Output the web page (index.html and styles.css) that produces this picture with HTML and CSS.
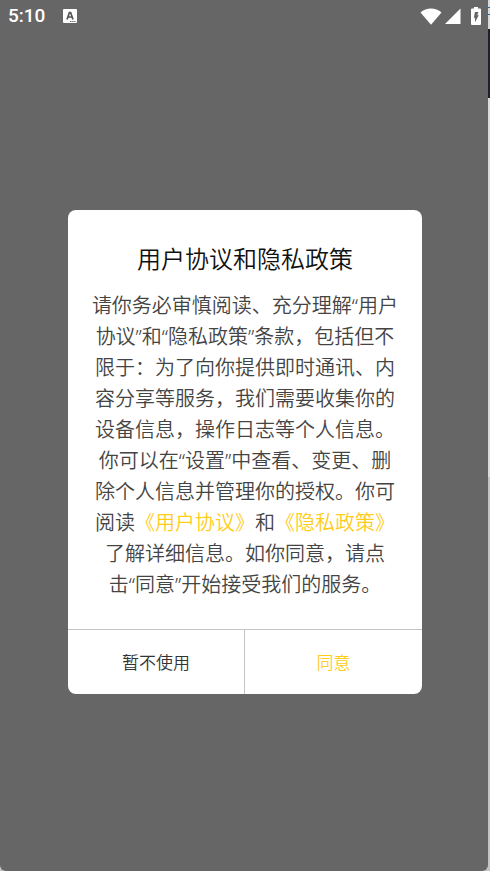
FILE: index.html
```html
<!DOCTYPE html>
<html lang="zh-CN">
<head>
  <meta charset="UTF-8" />
  <meta name="viewport" content="width=device-width, initial-scale=1.0"/>
  <title>用户协议和隐私政策</title>
  <link rel="stylesheet" href="styles.css">
</head>
<body>
  <div class="screen">
    <header class="statusbar">
      <span class="time">5:10</span>
      <svg class="icon-input" width="14" height="14" viewBox="0 0 14 14">
        <rect width="14" height="14" rx="1" fill="#fff"/>
        <path d="M4 10.5 L6.4 3.5 H7.6 L10 10.5 M5 8 H9" fill="none" stroke="#555" stroke-width="1.7"/>
        <path d="M7 12.5 H12.5" stroke="#666" stroke-dasharray="1.5 0.6"/>
      </svg>
      <div class="indicators">
        <svg width="22" height="17" viewBox="0 0 22 17">
          <path d="M0.5 4.5 C6 -1 16 -1 21.5 4.5 L11 16.8 Z" fill="#fff"/>
        </svg>
        <svg class="icon-signal" width="16" height="16" viewBox="0 0 16 16">
          <path d="M0 16 L15.5 0.5 V16 Z" fill="#fff"/>
        </svg>
        <svg class="icon-battery" width="10" height="18" viewBox="0 0 10 18">
          <path d="M3 0 H7 V1.5 H9 Q10 1.5 10 2.5 V17 Q10 18 9 18 H1 Q0 18 0 17 V2.5 Q0 1.5 1 1.5 H3 Z" fill="#fff"/>
          <path d="M4 5 H7.4 L6.3 8.3 H7.8 L4 15.2 V10.8 H2.8 Z" fill="#666"/>
        </svg>
      </div>
    </header>

    <main class="content">
      <section class="dialog" role="dialog" aria-labelledby="dialog-title">
        <h1 class="dialog-title" id="dialog-title">用户协议和隐私政策</h1>
        <p class="dialog-text">请你务必审慎阅读、充分理解“用户协议”和“隐私政策”条款，包括但不限于：为了向你提供即时通讯、内容分享等服务，我们需要收集你的设备信息，操作日志等个人信息。你可以在“设置”中查看、变更、删除个人信息并管理你的授权。你可阅读<a href="#">《用户协议》</a>和<a href="#">《隐私政策》</a>了解详细信息。如你同意，请点<br>击“同意”开始接受我们的服务。</p>
        <div class="dialog-buttons">
          <button type="button" class="decline">暂不使用</button>
          <button type="button" class="agree">同意</button>
        </div>
      </section>
    </main>
  </div>
</body>
</html>
```
FILE: styles.css
```css
* {
  box-sizing: border-box;
}

body {
  margin: 0;
  padding-right: 2px;
  background: linear-gradient(
    #d8d8d8 7px, #2a6ca0 7px, #2a6ca0 8px,
    #d8d8d8 8px, #d8d8d8 14px, #2a6ca0 14px, #2a6ca0 15px,
    #d8d8d8 15px, #d8d8d8 29px, #1c2030 29px, #1c2030 98px,
    #dcdcdc 98px, #dcdcdc 477px, #c4c4c4 477px);
  font-family: Roboto, "Noto Sans CJK SC", sans-serif;
}

.screen {
  display: flex;
  flex-direction: column;
  min-height: 100vh;
  background: #666;
  border-radius: 0 0 6px 6px;
}

/* status bar */
.statusbar {
  display: flex;
  align-items: center;
  height: 32px;
  padding: 0 7px 0 8px;
  color: #fff;
}

.time {
  font-size: 19px;
  font-weight: 500;
  line-height: 34px;
}

.icon-input {
  margin-left: 18px;
}

.indicators {
  display: flex;
  align-items: center;
  margin-left: auto;
}

.icon-signal {
  margin-left: 3px;
}

.icon-battery {
  margin-left: 10px;
}

/* dialog */
.content {
  flex: 1;
  display: flex;
  align-items: center;
  justify-content: center;
  padding: 0 66px 0 68px;
}

.dialog {
  width: 100%;
  max-width: 420px;
  background: #fff;
  border-radius: 8px;
  overflow: hidden;
  text-align: center;
  font-family: "Noto Sans", "Noto Sans CJK SC", sans-serif;
  font-weight: 350;
}

.dialog-title {
  margin: 0;
  padding: 31px 22px 14px;
  color: #111;
  font-size: 24px;
  font-weight: inherit;
  line-height: 35px;
}

.dialog-text {
  margin: 0;
  padding: 0 22px 29px;
  color: #444;
  font-size: 20px;
  line-height: 31px;
}

.dialog-text a {
  display: inline-block;
  color: #ffcc1a;
  text-decoration: none;
}

.dialog-buttons {
  display: flex;
  border-top: 1px solid #c4c4c4;
}

.dialog-buttons button {
  width: 50%;
  height: 64px;
  padding: 0;
  border: 0;
  background: none;
  color: #333;
  font-family: inherit;
  font-size: 17px;
  font-weight: inherit;
  cursor: pointer;
}

.dialog-buttons .decline {
  border-right: 1px solid #c4c4c4;
}

.dialog-buttons .agree {
  color: #ffcc1a;
}
```
